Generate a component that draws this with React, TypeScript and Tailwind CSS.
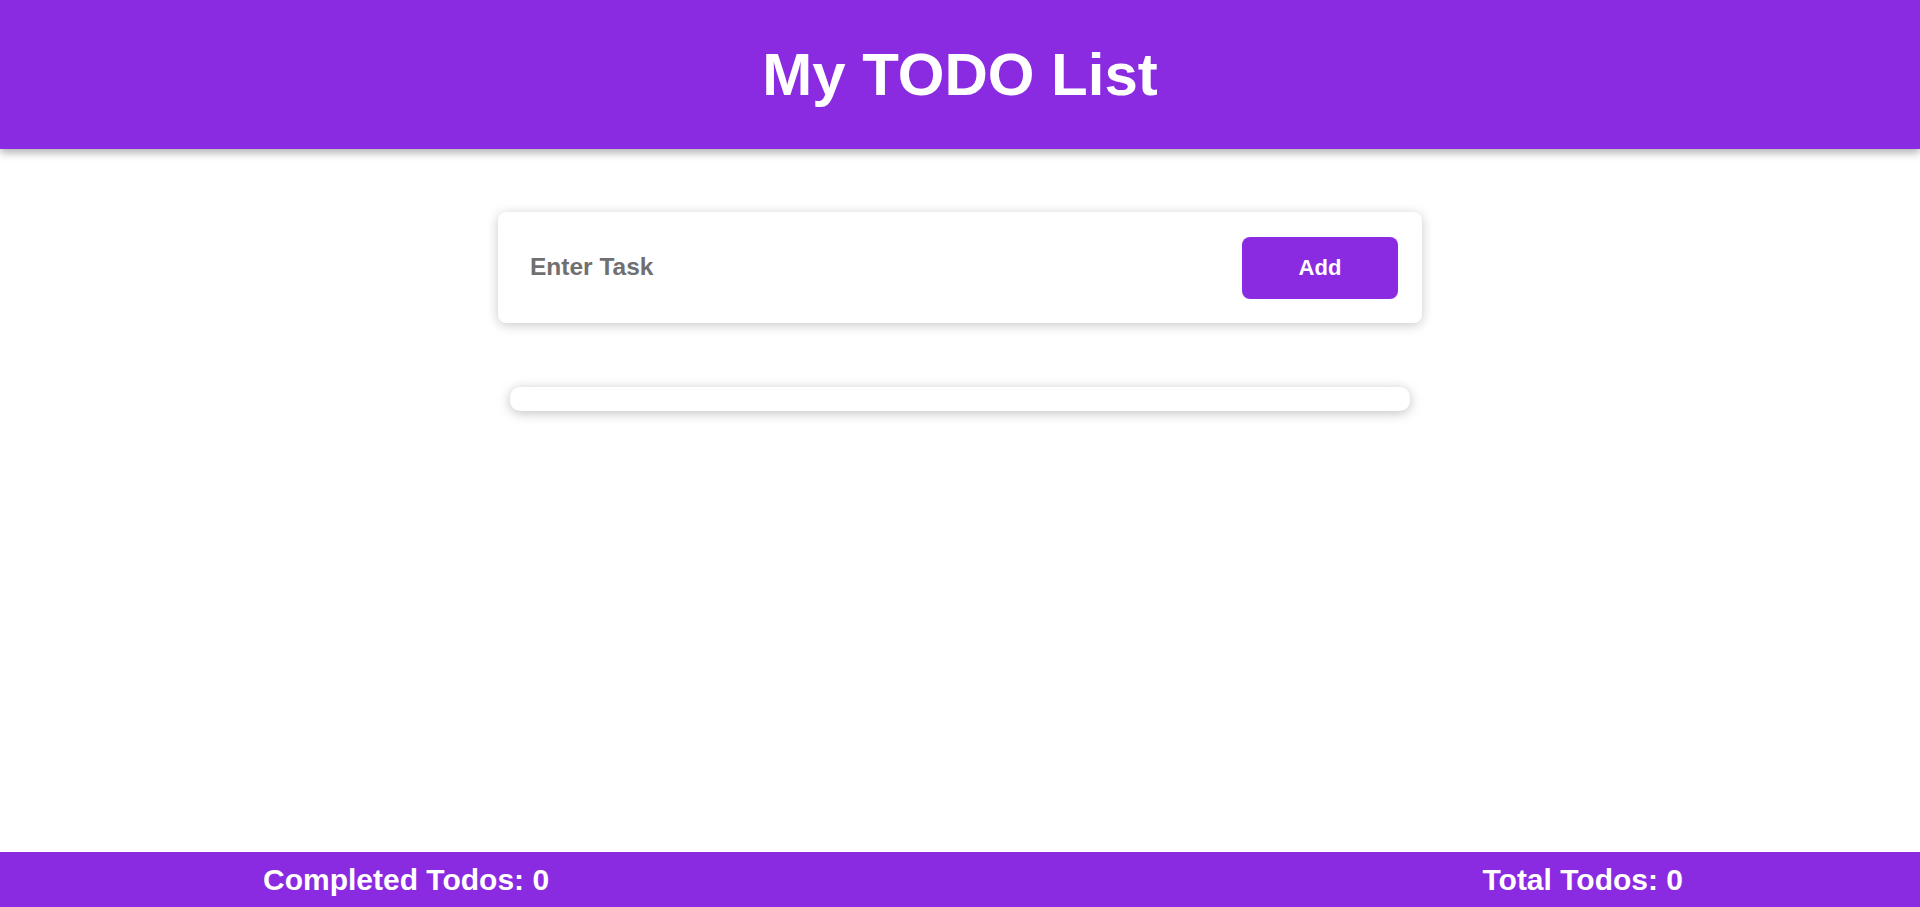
import React, { useState } from "react";

type Todo = { id: number; text: string; done: boolean };

export default function App() {
  const [task, setTask] = useState("");
  const [todos, setTodos] = useState<Todo[]>([]);

  const addTodo = () => {
    if (!task.trim()) return;
    setTodos([...todos, { id: Date.now(), text: task.trim(), done: false }]);
    setTask("");
  };

  const completed = todos.filter((t) => t.done).length;

  return (
    <div className="min-h-screen flex flex-col bg-white font-['Liberation_Sans',Arial,sans-serif]">
      {/* header */}
      <header className="bg-[#8a2be2] h-[149px] flex items-center justify-center shadow-[0_4px_8px_rgba(0,0,0,0.3)] relative">
        <h1 className="text-white text-[60px] font-bold leading-none">My TODO List</h1>
      </header>

      <main className="flex flex-col items-center pt-[63px]">
        <div className="w-[924px] h-[111px] bg-white rounded-lg shadow-[0_2px_12px_rgba(0,0,0,0.22)] flex items-center justify-between pl-8 pr-6">
          <input
            value={task}
            onChange={(e) => setTask(e.target.value)}
            placeholder="Enter Task"
            className="flex-1 outline-none text-[24.5px] font-bold text-gray-800 placeholder:text-[#707070] bg-transparent"
          />
          <button
            onClick={addTodo}
            className="w-[156px] h-[62px] rounded-lg bg-[#8a2be2] text-white text-[22px] font-bold"
          >
            Add
          </button>
        </div>

        <ul className="w-[900px] min-h-[24px] mt-16 bg-white rounded-[10px] shadow-[0_2px_12px_rgba(0,0,0,0.25)]">
          {todos.map((t) => (
            <li key={t.id} className="px-6 py-3 text-[20px]">
              {t.text}
            </li>
          ))}
        </ul>
      </main>

      {/* footer */}
      <footer className="mt-auto bg-[#8a2be2] h-[55px] flex items-center justify-between pl-[263px] pr-[237px] text-white text-[30px] font-bold">
        <span>Completed Todos: {completed}</span>
        <span>Total Todos: {todos.length}</span>
      </footer>
    </div>
  );
}
